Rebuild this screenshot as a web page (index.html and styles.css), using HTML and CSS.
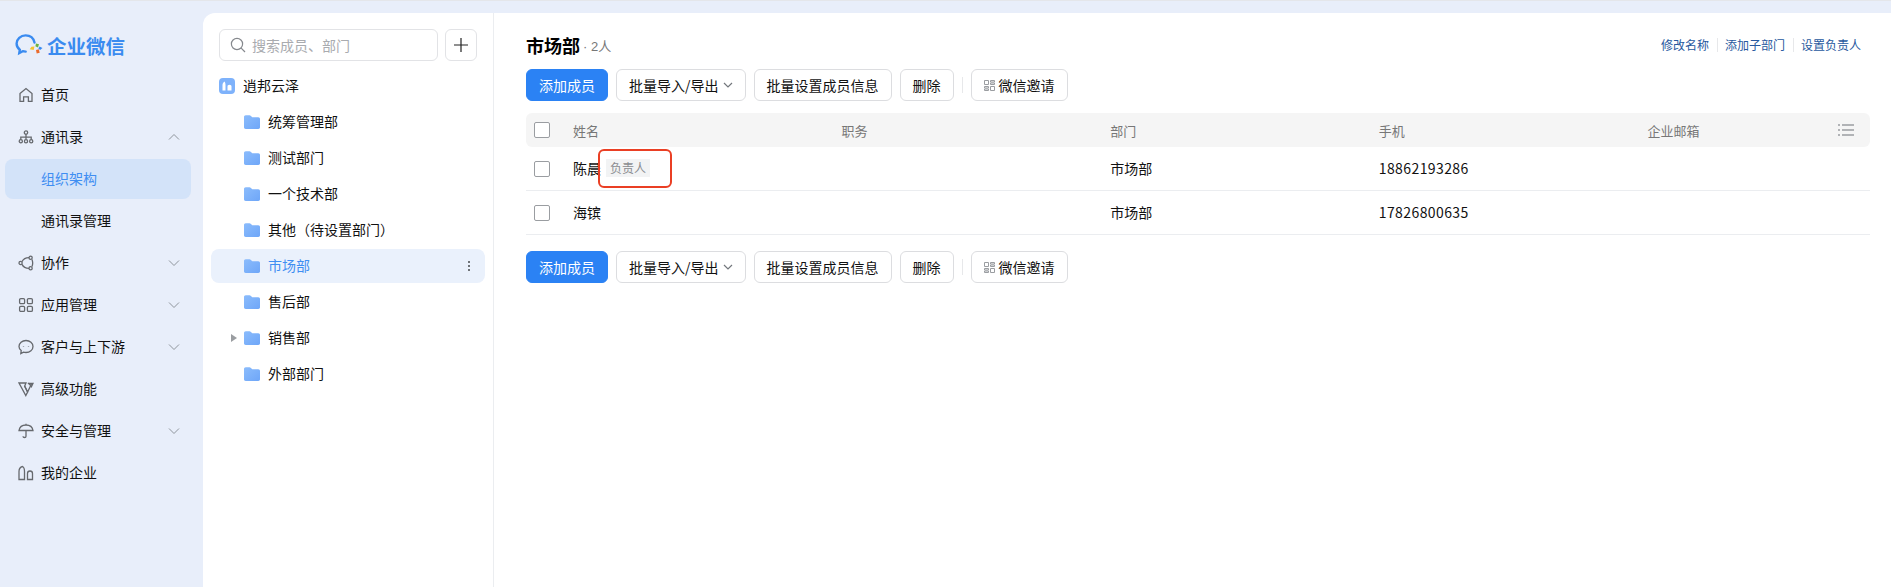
FILE: index.html
```html
<!DOCTYPE html>
<html lang="zh-CN">
<head>
<meta charset="utf-8">
<title>企业微信</title>
<link rel="stylesheet" href="styles.css">
</head>
<body>
<div class="app">
  <aside class="nav">
    <div class="logo">
      <svg class="logo-icon" viewBox="0 0 30 24" width="30" height="24">
        <path d="M19.500 9.500C18.500 5 15 2.400 10.600 2.400 5.600 2.400 1.600 6 1.600 10.600c0 2.600 1.200 4.700 3.200 6.200l-.5 3.200 3.400-1.800c1 .3 2 .4 3 .4" fill="none" stroke="#3a8bf0" stroke-width="2.400" stroke-linecap="round"/>
        <path d="M21 10.500l3 .7-1 3.300-2.600-1.200z" fill="#6cb33f"/>
        <path d="M19.500 13.500l-.8 3.500-4-.7 1.800-2.600z" fill="#f5c330"/>
        <path d="M24.500 13.500l3 1.600-2.400 2-1.800-1.600z" fill="#3a8bf0"/>
        <path d="M21 17l2.800-.8.9 3.600-3 .8z" fill="#ea6b2d"/>
      </svg>
      <span>企业微信</span>
    </div>
    <ul class="menu">
      <li class="menu-item">
        <svg class="mi" viewBox="0 0 16 16"><path d="M2 6.600L8 1.600l6 5V14.400h-3.600V9.800H5.600v4.600H2z"/></svg>
        <span class="ml">首页</span>
      </li>
      <li class="menu-item">
        <svg class="mi" viewBox="0 0 16 16"><circle cx="8" cy="3.600" r="1.700"/><circle cx="2.800" cy="12.200" r="1.600"/><circle cx="8" cy="12.200" r="1.600"/><circle cx="13.200" cy="12.200" r="1.600"/><path d="M8 5.300v5M2.800 10.600V8.200h10.400v2.400"/></svg>
        <span class="ml">通讯录</span>
        <svg class="chev" viewBox="0 0 12 12"><path d="M1 8.500l5-5 5 5"/></svg>
      </li>
      <li class="menu-item sub active"><span class="ml">组织架构</span></li>
      <li class="menu-item sub"><span class="ml">通讯录管理</span></li>
      <li class="menu-item">
        <svg class="mi" viewBox="0 0 16 16"><circle cx="12.600" cy="2.800" r="1.600"/><circle cx="2.600" cy="8" r="1.600"/><circle cx="12.600" cy="13.200" r="1.600"/><path d="M11 2.600C7.600 2.600 5.200 4.200 4 6.600M4 9.400c1.200 2.400 3.600 4 7 4M14 4.400c.9 2.400.9 4.800 0 7.200"/></svg>
        <span class="ml">协作</span>
        <svg class="chev" viewBox="0 0 12 12"><path d="M1 3.500l5 5 5-5"/></svg>
      </li>
      <li class="menu-item">
        <svg class="mi" viewBox="0 0 16 16"><rect x="1.600" y="1.600" width="5" height="5" rx="1.200"/><rect x="9.400" y="1.600" width="5" height="5" rx="1.200"/><rect x="1.600" y="9.400" width="5" height="5" rx="1.200"/><rect x="9.400" y="9.400" width="5" height="5" rx="1.200"/></svg>
        <span class="ml">应用管理</span>
        <svg class="chev" viewBox="0 0 12 12"><path d="M1 3.500l5 5 5-5"/></svg>
      </li>
      <li class="menu-item">
        <svg class="mi" viewBox="0 0 16 16"><path d="M8 1.500c3.900 0 7 2.700 7 6s-3.100 6-7 6c-.9 0-1.700-.1-2.500-.4L2.800 14.600l.4-3C1.800 10.500 1 9.100 1 7.500c0-3.300 3.100-6 7-6z"/><path d="M5.500 7.200v.6M10.500 7.200v.6"/></svg>
        <span class="ml">客户与上下游</span>
        <svg class="chev" viewBox="0 0 12 12"><path d="M1 3.500l5 5 5-5"/></svg>
      </li>
      <li class="menu-item">
        <svg class="mi" viewBox="0 0 16 16"><path d="M1 2h7L6.600 5.200 9.600 11 7.800 14.500z"/><path d="M6.700 5l2.900 6 3.700-7.600L9.800 2.300"/><path d="M11 2.400h4l-1.600 3.400z"/></svg>
        <span class="ml">高级功能</span>
      </li>
      <li class="menu-item">
        <svg class="mi" viewBox="0 0 16 16"><path d="M1 7.500C1.500 4.300 4.300 2 8 2s6.500 2.300 7 5.500zM8 .8V2M8 7.500v5.700c0 1.700-2.900 1.700-3 0"/></svg>
        <span class="ml">安全与管理</span>
        <svg class="chev" viewBox="0 0 12 12"><path d="M1 3.500l5 5 5-5"/></svg>
      </li>
      <li class="menu-item">
        <svg class="mi" viewBox="0 0 16 16"><path d="M1 14.500V6.500C1 4 2.500 2 4.500 1.500c1.200.5 2 2.500 2 5v8zM9.500 14.500V8.500c0-1.500 1-2.500 2.500-2.500s2.500 1 2.500 2.500v6z"/></svg>
        <span class="ml">我的企业</span>
      </li>
    </ul>
  </aside>

  <div class="panel">
    <section class="tree">
      <div class="search-row">
        <div class="search">
          <svg class="search-icon" viewBox="0 0 16 16" width="16" height="16"><circle cx="7" cy="7" r="5.600"/><path d="M11.200 11.200l3.800 3.800"/></svg>
          <span>搜索成员、部门</span>
        </div>
        <div class="plus"><svg viewBox="0 0 14 14" width="14" height="14"><path d="M7 0v14M0 7h14"/></svg></div>
      </div>
      <div class="root">
        <svg class="root-icon" viewBox="0 0 16 16" width="16" height="16"><rect width="16" height="16" rx="4" fill="#7eb2fb"/><path d="M3.500 12.500V7c0-1.500.8-2.800 2-3.500.7.700 1 2 1 3.500v5.500zM8.500 12.500V8.500c0-1 .7-1.700 2-1.700s2 .7 2 1.700v4z" fill="#fff"/></svg>
        <span>逍邦云泽</span>
      </div>
      <ul class="depts">
        <li class="dept"><svg class="folder" viewBox="0 0 16 14" width="16" height="14"><use href="#fd"/></svg><span>统筹管理部</span></li>
        <li class="dept"><svg class="folder" viewBox="0 0 16 14" width="16" height="14"><use href="#fd"/></svg><span>测试部门</span></li>
        <li class="dept"><svg class="folder" viewBox="0 0 16 14" width="16" height="14"><use href="#fd"/></svg><span>一个技术部</span></li>
        <li class="dept"><svg class="folder" viewBox="0 0 16 14" width="16" height="14"><use href="#fd"/></svg><span>其他（待设置部门）</span></li>
        <li class="dept current"><svg class="folder" viewBox="0 0 16 14" width="16" height="14"><use href="#fd"/></svg><span>市场部</span><i class="more"><b></b><b></b><b></b></i></li>
        <li class="dept"><svg class="folder" viewBox="0 0 16 14" width="16" height="14"><use href="#fd"/></svg><span>售后部</span></li>
        <li class="dept"><i class="caret"></i><svg class="folder" viewBox="0 0 16 14" width="16" height="14"><use href="#fd"/></svg><span>销售部</span></li>
        <li class="dept"><svg class="folder" viewBox="0 0 16 14" width="16" height="14"><use href="#fd"/></svg><span>外部部门</span></li>
      </ul>
      <svg class="defs" width="0" height="0"><defs>
        <linearGradient id="fg" x1="0" y1="0" x2="1" y2="1"><stop offset="0" stop-color="#8bbcfc"/><stop offset="1" stop-color="#6ea6f8"/></linearGradient>
        <path id="fd" d="M0 2C0 1 .7.300 1.700.300H5.500c.6 0 1 .2 1.400.6L8.300 2.300H14.300c1 0 1.700.7 1.700 1.700v8.300c0 1-.7 1.700-1.700 1.700H1.700C.7 14 0 13.300 0 12.300z" fill="url(#fg)"/>
      </defs></svg>
    </section>

    <main class="content">
      <header class="head">
        <div class="title"><h1>市场部</h1><span class="count">· 2人</span></div>
        <nav class="links"><a>修改名称</a><a>添加子部门</a><a>设置负责人</a></nav>
      </header>
      <div class="toolbar">
        <button class="btn primary">添加成员</button>
        <button class="btn">批量导入/导出<svg class="btn-chev" viewBox="0 0 10 10"><path d="M1 3l4 4 4-4"/></svg></button>
        <button class="btn">批量设置成员信息</button>
        <button class="btn">删除</button>
        <i class="sep"></i>
        <button class="btn"><svg class="qr" viewBox="0 0 11 11"><path d="M.5.500h4v4h-4zM6.500.500h4v1.500h-4zM6.500 3h4v1.500h-4zM.5 6.500h4v1.500h-4zM.5 9h4v1.500h-4zM6.500 6.500h4v4h-4z"/></svg>微信邀请</button>
      </div>
      <div class="table">
        <div class="row thead">
          <i class="check"></i>
          <span class="cell">姓名</span><span class="cell">职务</span><span class="cell">部门</span><span class="cell">手机</span><span class="cell">企业邮箱</span>
          <svg class="cols" viewBox="0 0 16 12" width="16" height="12"><path d="M4 1h12M4 6h12M4 11h12M0 1h2M0 6h2M0 11h2"/></svg>
        </div>
        <div class="row body-row">
          <i class="check"></i>
          <span class="cell name">陈晨<em class="tag">负责人</em></span><span class="cell"></span><span class="cell">市场部</span><span class="cell phone">18862193286</span><span class="cell"></span>
          <i class="highlight"></i>
        </div>
        <div class="row body-row">
          <i class="check"></i>
          <span class="cell name">海镔</span><span class="cell"></span><span class="cell">市场部</span><span class="cell phone">17826800635</span><span class="cell"></span>
        </div>
      </div>
      <div class="toolbar bottom">
        <button class="btn primary">添加成员</button>
        <button class="btn">批量导入/导出<svg class="btn-chev" viewBox="0 0 10 10"><path d="M1 3l4 4 4-4"/></svg></button>
        <button class="btn">批量设置成员信息</button>
        <button class="btn">删除</button>
        <i class="sep"></i>
        <button class="btn"><svg class="qr" viewBox="0 0 11 11"><path d="M.5.500h4v4h-4zM6.500.500h4v1.500h-4zM6.500 3h4v1.500h-4zM.5 6.500h4v1.500h-4zM.5 9h4v1.500h-4zM6.500 6.500h4v4h-4z"/></svg>微信邀请</button>
      </div>
    </main>
  </div>
</div>
</body>
</html>
```
FILE: styles.css
```css
* { box-sizing: border-box; }
html, body { margin: 0; height: 100%; overflow: hidden; }
body {
  font-family: "Noto Sans CJK SC", "Liberation Sans", sans-serif;
  font-size: 14px;
  color: #111;
  background: #e8eefa;
}
ul { list-style: none; margin: 0; padding: 0; }
.app { display: flex; height: 587px; border-top: 1px solid #e4e6ea; padding-top: 12px; }

.nav { width: 203px; flex: none; }
.logo { display: flex; align-items: center; height: 24px; margin: 20px 0 0 15px; color: #3a8bf0; font-size: 19.500px; font-weight: 700; gap: 2px; }
.logo-icon { flex: none; }
.menu { margin-top: 18px; padding: 0 12px 0 5px; }
.menu-item { display: flex; align-items: center; height: 40px; margin-bottom: 2px; padding-left: 13px; border-radius: 8px; position: relative; line-height: 20px; }
.ml { position: relative; top: -1px; }
.mi { width: 16px; height: 16px; margin-right: 7px; fill: none; stroke: #66696e; stroke-width: 1.300; flex: none; }
.sub { padding-left: 36px; }
.active { background: #d3e3f9; color: #3f8ef2; }
.chev { position: absolute; left: 163px; width: 12px; height: 12px; fill: none; stroke: #8f959c; stroke-width: 1; }

.panel { flex: 1; min-width: 0; display: flex; background: #fff; border-top-left-radius: 12px; }
.tree { width: 291px; flex: none; border-right: 1px solid #ebedf0; padding: 16px 7px 0 8px; }
.search-row { display: flex; gap: 7px; padding-left: 8px; }
.search { width: 219px; height: 32px; border: 1px solid #e2e3e6; border-radius: 6px; display: flex; align-items: center; padding-left: 10px; gap: 6px; color: #a9abaf; }
.search-icon { fill: none; stroke: #85888d; stroke-width: 1.200; }
.plus { width: 32px; height: 32px; border: 1px solid #e2e3e6; border-radius: 6px; display: flex; align-items: center; justify-content: center; }
.plus svg { fill: none; stroke: #222; stroke-width: 1.200; }
.root { display: flex; align-items: center; gap: 8px; height: 36px; margin-top: 7px; padding-left: 8px; }
.root span, .dept span { padding-bottom: 2px; }
.dept { display: flex; align-items: center; height: 34px; margin-bottom: 2px; padding-left: 33px; gap: 8px; border-radius: 8px; position: relative; width: 274px; }
.depts { padding-top: 1px; }
.current { background: #eaf1fc; color: #3f8ef2; }
.more { position: absolute; right: 15px; top: 12px; display: flex; flex-direction: column; gap: 2px; }
.more b { display: block; width: 2px; height: 2px; background: #6f7378; }
.caret { position: absolute; left: 20px; top: 13px; border-left: 6px solid #9a9da1; border-top: 4px solid transparent; border-bottom: 4px solid transparent; }
.defs { position: absolute; }

.content { flex: 1; min-width: 0; padding: 0 21px 0 32px; }
.head { display: flex; justify-content: space-between; align-items: center; height: 30px; margin-top: 17px; }
.title { display: flex; align-items: center; gap: 3px; }
h1 { margin: 0; font-size: 18px; font-weight: 700; color: #000; }
.count { font-family: "Liberation Sans", "Noto Sans CJK SC", sans-serif; font-size: 13px; color: #777; }
.links { display: flex; font-size: 12px; color: #27589e; padding-right: 9px; }
.links a { padding: 0 8px 0 7px; line-height: 14px; border-left: 1px solid #e7e8ea; }
.links a:first-child { border-left: 0; }
.links a:last-child { padding-right: 0; }
.toolbar { display: flex; align-items: center; gap: 8px; margin-top: 9px; }
.toolbar.bottom { margin-top: 16px; }
.btn { height: 32px; padding: 0 12px; background: #fff; border: 1px solid #dcdde0; border-radius: 6px; font: inherit; color: #111; display: flex; align-items: center; white-space: nowrap; }
.primary { background: #2b82f4; border-color: #2b82f4; color: #fff; }
.btn-chev { width: 10px; height: 10px; margin-left: 4px; fill: none; stroke: #73777c; stroke-width: 1.200; }
.qr { width: 11px; height: 11px; margin-right: 4px; fill: none; stroke: #9a9da1; stroke-width: 1; }
.sep { width: 1px; height: 16px; background: #e7e8ea; }
.table { margin-top: 12px; }
.row { display: flex; align-items: center; height: 44px; border-bottom: 1px solid #ebedf0; position: relative; padding-left: 47px; }
.body-row .cell { padding-bottom: 2px; }
.thead { height: 34px; background: #f5f5f5; border-bottom: 0; border-radius: 6px; color: #777; font-size: 13px; }
.cell { width: 268.600px; flex: none; display: flex; align-items: center; }
.cell:last-of-type { width: auto; flex: 1; min-width: 0; }
.phone { letter-spacing: .4px; }
.check { position: absolute; left: 8px; top: 50%; margin-top: -8px; width: 16px; height: 16px; border: 1px solid #9a9da1; border-radius: 2px; background: #fff; }
.cols { position: absolute; right: 16px; top: 11px; fill: none; stroke: #6f7378; stroke-width: 1.200; }
.tag { font-style: normal; font-size: 12px; color: #8a8c90; background: #f2f3f4; padding: 0 4px; margin-left: 5px; line-height: 18px; }
.highlight { position: absolute; left: 72px; top: 2px; width: 74px; height: 39px; border: 2px solid #ea3f24; border-radius: 6px; }
```
